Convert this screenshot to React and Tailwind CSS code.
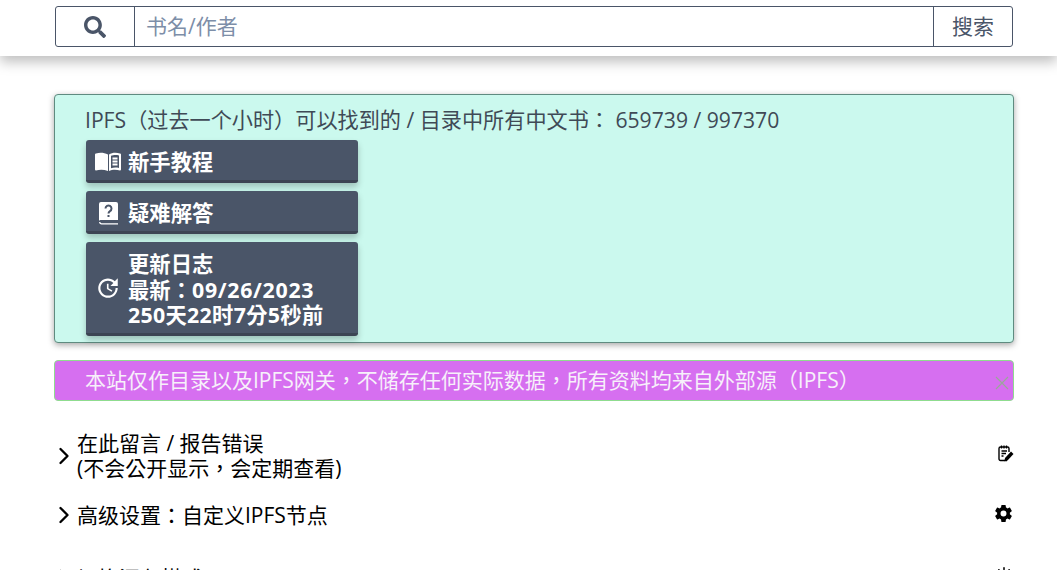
import { MdUpdate } from 'react-icons/md'
import { FaSearch } from 'react-icons/fa'
import { IoSettingsSharp, IoSunny } from 'react-icons/io5'
import { ChevronRight } from 'lucide-react'

const font = "font-['Open_Sans','Noto_Sans_CJK_TC',sans-serif]"

// ── Icons that the packages do not have ───────────────────────────────────
function OpenBook() {
  return (
    <svg width="26" height="20" viewBox="0 0 26 20">
      <path fill="#fff" d="M1 1.500C4.500 0.500 9 0.500 13 2.500V19C9 17.500 4.500 17.500 1 18.500A1 1 0 0 1 0 17.500V2.500A1 1 0 0 1 1 1.500z" />
      <path fill="#fff" fillRule="evenodd" d="M14 2.500C17 0.500 21.500 0.500 25 1.500A1 1 0 0 1 26 2.500V17.500A1 1 0 0 1 25 18.500C21.500 17.500 17 17.500 14 19zM16 3.800V16.300C18 15.500 21.500 15.400 24 16V3.400C21.500 2.800 18 2.900 16 3.800z" />
      <path stroke="#fff" strokeWidth="1.800" d="M17.500 6.500h5M17.500 9.500h5M17.500 12.500h5" />
    </svg>
  )
}

function QuestionBook() {
  return (
    <svg width="19" height="23" viewBox="0 0 19 23">
      <path fill="#fff" d="M2 0h15a2 2 0 0 1 2 2v16H2a2 2 0 0 0-2 .800V2a2 2 0 0 1 2-2z" />
      <path fill="none" stroke="#fff" strokeWidth="1.300" d="M19 21.800H2.500A1.800 1.800 0 0 1 .700 20" />
      <path fill="none" stroke="#4a5568" strokeWidth="2" d="M6.500 6.500a3 3 0 1 1 4.500 2.600C10 9.800 9.500 10.300 9.500 11.500" />
      <rect x="8.500" y="13" width="2" height="2" fill="#4a5568" />
    </svg>
  )
}

function NoteEdit() {
  return (
    <svg width="16" height="17" viewBox="0 0 16 17">
      <path fill="none" stroke="#000" strokeWidth="1.400" d="M9 15.500H2.500A1.500 1.500 0 0 1 1 14V3.500A1.500 1.500 0 0 1 2.500 2h7A1.500 1.500 0 0 1 11 3.500V7" />
      <path stroke="#000" strokeWidth="1.300" d="M3.500 0.500v3M6 0.500v3M8.500 0.500v3M3.500 6h5.500M3.500 8.500h4.500M3.500 11h2" />
      <path fill="#000" d="M13 6.500l2.500 2.500-6 6.500-3.200.7.700-3.200z" />
    </svg>
  )
}

function TutorialButton({ icon, children }) {
  return (
    <button className="flex w-[272px] items-center gap-[7px] rounded-[3px] border-b-[3px] border-[#3c4453] bg-[#4a5568] pb-[5.25px] pl-[9px] pt-[9.25px] text-left text-[21.33px] leading-[25.5px] font-bold text-white shadow-[0_4px_6px_rgba(0,0,0,0.22)]">
      <span className="flex w-[26px] shrink-0 justify-center">{icon}</span>
      <span>{children}</span>
    </button>
  )
}

function Row({ icon, className, children }) {
  return (
    <div className={`flex items-center text-[21px] leading-[25px] text-black ${className}`}>
      <ChevronRight size={28} strokeWidth={2} className="ml-[-4px] mr-[-1px] shrink-0" />
      <div className="flex-1">{children}</div>
      {icon}
    </div>
  )
}

export default function App() {
  return (
    <div className={`h-screen overflow-hidden bg-white ${font}`}>
      <header className="h-[56px] bg-white px-[55px] pt-[6px] shadow-[0_6px_12px_rgba(0,0,0,0.25)]">
        <div className="flex h-[41px] w-[958px] rounded-[3px] border border-[#4a5568] text-[21px] text-[#4a5568]">
          <div className="flex w-[79px] items-center justify-center border-r border-[#4a5568]">
            <FaSearch size={22} />
          </div>
          <div className="flex-1 pl-[11px] leading-[39px] text-[#7d8ea8]">书名/作者</div>
          <div className="flex w-[79px] items-center justify-center border-l border-[#4a5568]">搜索</div>
        </div>
      </header>

      <main className="ml-[54px] w-[960px] pt-[38px]">
        <section className="h-[249px] rounded-[4px] border border-[#5f8b80] bg-[#cbf9ee] pl-[30px] pt-[11px] shadow-[0_2px_6px_rgba(0,0,0,0.35)]">
          <p className="text-[21.15px] leading-[28px] text-[#3f4a56]">IPFS（过去一个小时）可以找到的 / 目录中所有中文书： 659739 / 997370</p>
          <div className="ml-[1px] mt-[6px] flex flex-col gap-[8px]">
            <TutorialButton icon={<OpenBook />}>新手教程</TutorialButton>
            <TutorialButton icon={<QuestionBook />}>疑难解答</TutorialButton>
            <TutorialButton icon={<span className="mb-[4px]"><MdUpdate size={26} /></span>}>
              更新日志
              <br />
              最新：<span className="tracking-[0.7px]">09/26/2023</span>
              <br />
              <span className="tracking-[0.3px]">250天22时7分5秒前</span>
            </TutorialButton>
          </div>
        </section>

        <section className="relative mt-[17px] h-[41px] rounded-[4px] border border-[#8fdc8f] bg-[#d66ff0] pl-[30px] text-[21px] leading-[39px] text-[#f7f0fa]">
          本站仅作目录以及IPFS网关，不储存任何实际数据，所有资料均来自外部源（IPFS）
          <svg width="14" height="14" viewBox="0 0 14 14" className="absolute right-[4px] top-[15px]">
            <path stroke="#9aa79a" strokeWidth="1.200" d="M1 1l12 12M13 1L1 13" />
          </svg>
        </section>

        <div className="mt-[30px] flex flex-col">
          <Row icon={<span className="mb-[5px]"><NoteEdit /></span>}>
            在此留言 / 报告错误
            <br />
            (不会公开显示，会定期查看)
          </Row>
          <Row icon={<span className="mb-[3px] mr-[1px]"><IoSettingsSharp size={19} /></span>} className="mt-[20px]">高级设置：自定义IPFS节点</Row>
          <Row icon={<span className="mb-[6px] mr-[1px] flex"><IoSunny size={18} /></span>} className="mt-[35px]">切换深色模式</Row>
        </div>
      </main>
    </div>
  )
}
